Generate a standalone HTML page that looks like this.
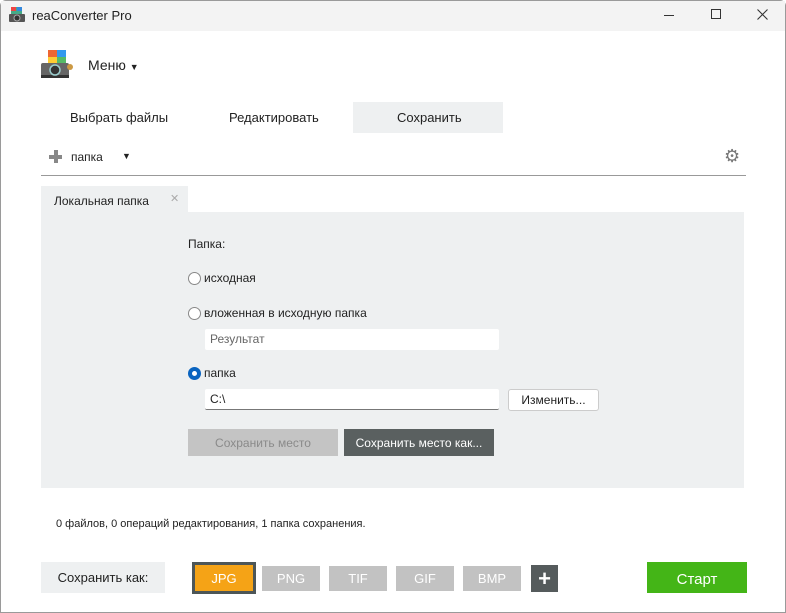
<!DOCTYPE html>
<html><head><meta charset="utf-8"><style>
*{margin:0;padding:0;box-sizing:border-box}
body{width:786px;height:613px;overflow:hidden;background:#fff;font-family:"Liberation Sans",sans-serif;color:#222;position:relative;font-size:12px}
.a{position:absolute}
.win{left:0;top:0;width:786px;height:613px;border:1px solid #9a9a9a;border-radius:6px 6px 0 0}
.title{left:1px;top:1px;width:784px;height:30px;background:#f3f3f3}
.panel{left:41px;top:212px;width:703px;height:276px;background:#eef0f1}
.btn{display:flex;align-items:center;justify-content:center;position:absolute}
.radio{width:13px;height:13px;border:1px solid #888;border-radius:50%;background:#fff}
.inp{background:#fff;border-radius:2px;height:21px;padding-left:5px;line-height:21px}
.fmt{background:#c2c2c2;color:#fff;font-size:13px;height:25px;top:566px}
</style></head><body>
<div class="a win"></div>
<div class="a title"></div>
<svg class="a" style="left:8px;top:6px" width="18" height="17"><rect x="3" y="1" width="11" height="8" fill="#4a8"/><rect x="3" y="1" width="5" height="4" fill="#e44"/><rect x="9" y="1" width="5" height="4" fill="#38d"/><rect x="1" y="8" width="16" height="8" rx="1" fill="#555"/><circle cx="9" cy="12" r="3" fill="#333" stroke="#aaa"/></svg>
<div class="a" style="left:32px;top:8px;font-size:13px">reaConverter Pro</div>
<div class="a" style="left:664px;top:15px;width:10px;height:1px;background:#333"></div>
<div class="a" style="left:711px;top:9px;width:10px;height:10px;border:1px solid #333"></div>
<svg class="a" style="left:757px;top:9px" width="11" height="11"><path d="M0.5 0.5L10.5 10.5M10.5 0.5L0.5 10.5" stroke="#333" stroke-width="1.1"/></svg>
<svg class="a" style="left:40px;top:48px" width="34" height="32"><rect x="8" y="2" width="18" height="14" fill="#5b6"/><rect x="8" y="2" width="9" height="7" fill="#e63"/><rect x="17" y="2" width="9" height="7" fill="#39e"/><rect x="8" y="9" width="9" height="7" fill="#fc3"/><rect x="1" y="15" width="28" height="14" rx="2" fill="#666"/><rect x="1" y="27" width="28" height="3" fill="#333"/><circle cx="15" cy="22" r="5" fill="#333" stroke="#9cc" stroke-width="1.5"/><circle cx="30" cy="19" r="3" fill="#c94"/></svg>
<div class="a" style="left:88px;top:57px;font-size:14px">Меню <span style="font-size:9px">▼</span></div>
<div class="a" style="left:353px;top:102px;width:150px;height:31px;background:#eef0f1"></div>
<div class="a" style="left:70px;top:110px;font-size:13px">Выбрать файлы</div>
<div class="a" style="left:229px;top:110px;font-size:13px">Редактировать</div>
<div class="a" style="left:397px;top:110px;font-size:13px">Сохранить</div>
<div class="a" style="left:49px;top:150px;width:13px;height:13px"><div class="a" style="left:5px;top:0;width:4px;height:13px;background:#888"></div><div class="a" style="left:0;top:5px;width:13px;height:4px;background:#888"></div></div>
<div class="a" style="left:71px;top:150px">папка</div>
<div class="a" style="left:122px;top:151px;font-size:9px">▼</div>
<div class="a" style="left:724px;top:147px;font-size:18px;color:#777;line-height:18px">⚙</div>
<div class="a" style="left:41px;top:175px;width:705px;height:1px;background:#999"></div>
<div class="a" style="left:41px;top:186px;width:147px;height:26px;background:#eef0f1"></div>
<div class="a" style="left:54px;top:194px">Локальная папка</div>
<div class="a" style="left:170px;top:192px;color:#aaa;font-size:11px">✕</div>
<div class="a panel"></div>
<div class="a" style="left:188px;top:237px">Папка:</div>
<div class="a radio" style="left:188px;top:272px"></div><div class="a" style="left:204px;top:271px">исходная</div>
<div class="a radio" style="left:188px;top:307px"></div><div class="a" style="left:204px;top:306px">вложенная в исходную папка</div>
<div class="a inp" style="left:205px;top:329px;width:294px;color:#666">Результат</div>
<div class="a radio" style="left:188px;top:367px;border:4px solid #0a64c0"></div><div class="a" style="left:204px;top:366px">папка</div>
<div class="a inp" style="left:205px;top:389px;width:294px;border-bottom:1px solid #777">C:\</div>
<div class="btn" style="left:508px;top:389px;width:91px;height:22px;background:#fff;border:1px solid #ccc;border-radius:3px">Изменить...</div>
<div class="btn" style="left:188px;top:429px;width:150px;height:27px;background:#c4c4c4;color:#8a8a8a">Сохранить место</div>
<div class="btn" style="left:344px;top:429px;width:150px;height:27px;background:#5a6060;color:#fff">Сохранить место как...</div>
<div class="a" style="left:56px;top:518px;font-size:11px">0 файлов, 0 операций редактирования, 1 папка сохранения.</div>
<div class="btn" style="left:41px;top:562px;width:124px;height:31px;background:#eef0f1;font-size:13px">Сохранить как:</div>
<div class="btn" style="left:192px;top:562px;width:64px;height:32px;background:#f5a316;border:3px solid #4d5657;color:#fff;font-size:13px">JPG</div>
<div class="btn fmt" style="left:262px;width:58px">PNG</div>
<div class="btn fmt" style="left:329px;width:58px">TIF</div>
<div class="btn fmt" style="left:396px;width:58px">GIF</div>
<div class="btn fmt" style="left:463px;width:58px">BMP</div>
<div class="btn" style="left:531px;top:565px;width:27px;height:27px;background:#555b5c;color:#fff;font-size:22px;font-weight:bold">+</div>
<div class="btn" style="left:647px;top:562px;width:100px;height:31px;background:#44b517;color:#fff;font-size:15px;padding-top:3px">Старт</div>
</body></html>
